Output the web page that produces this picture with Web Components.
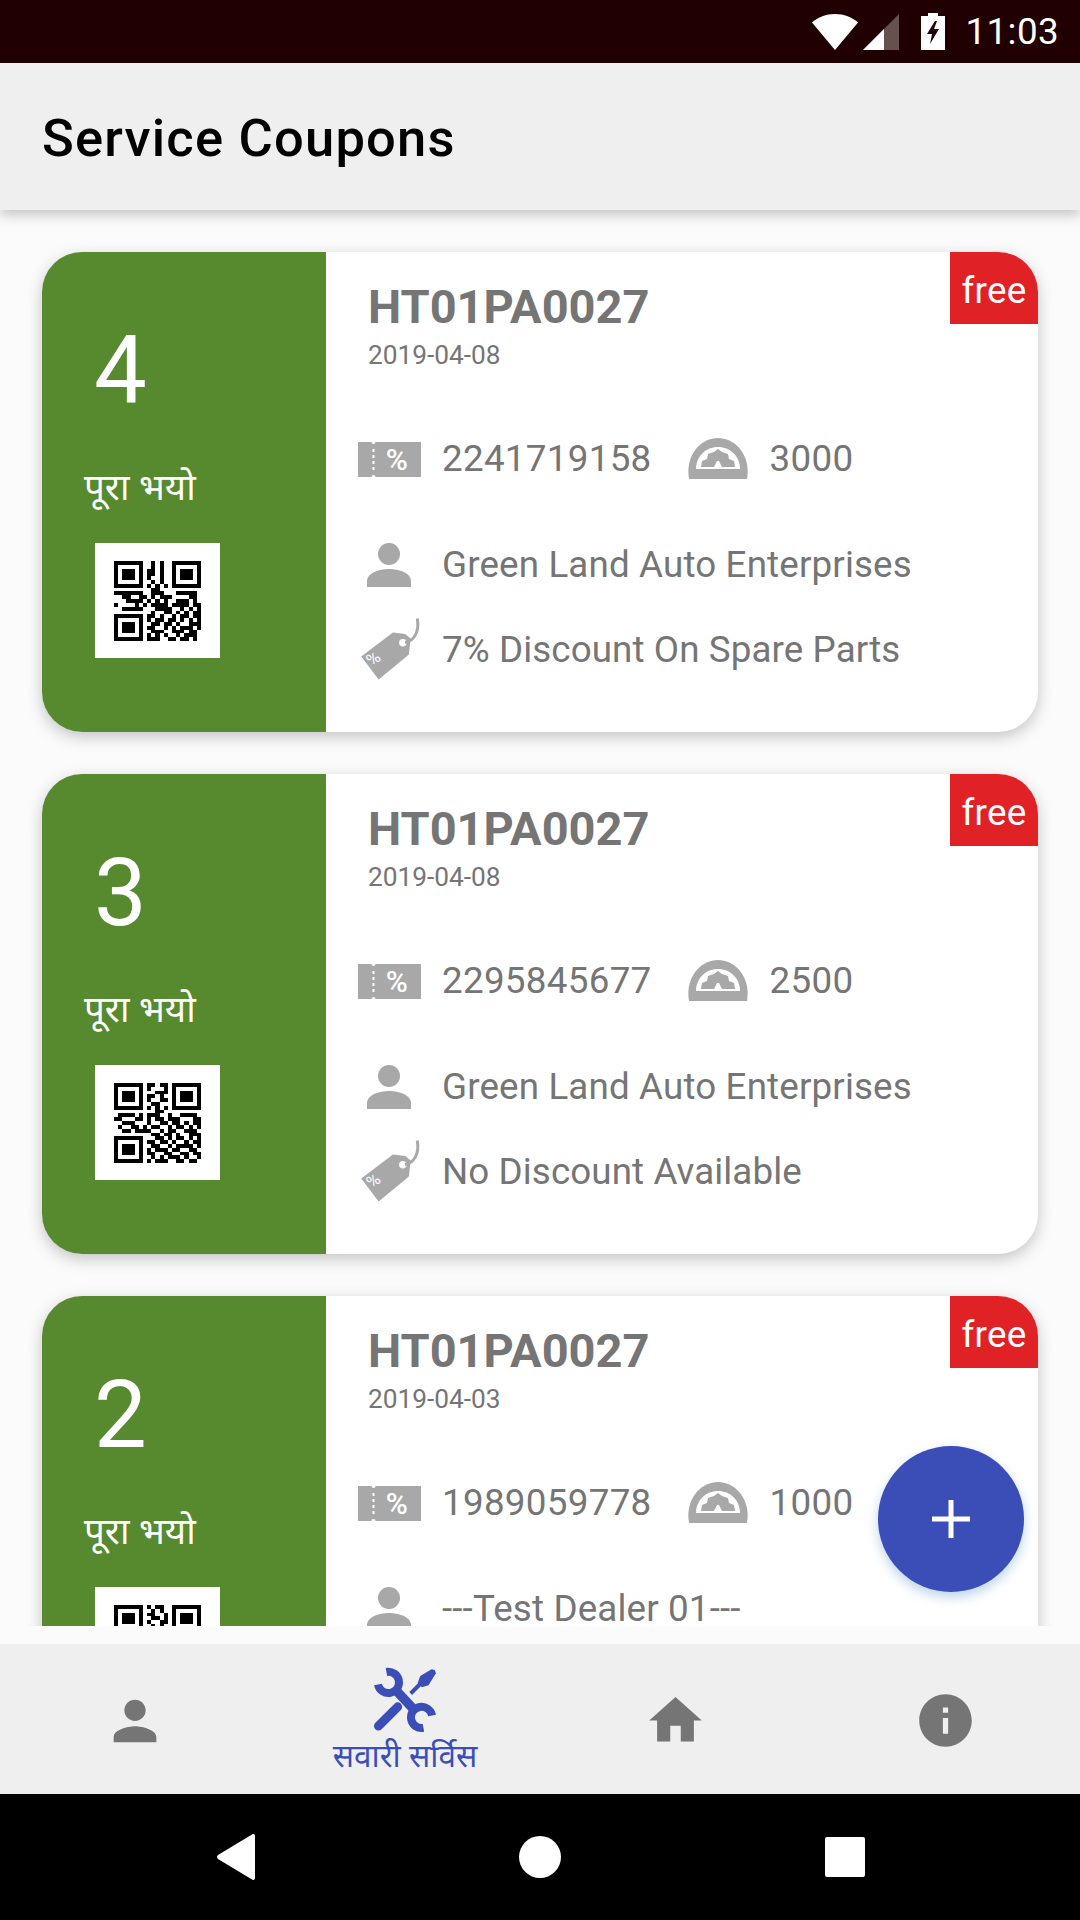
<!DOCTYPE html>
<html>
<head>
<meta charset="utf-8">
<style>
  html, body { margin: 0; padding: 0; }
  body { font-family: Roboto, "Noto Sans", sans-serif; background: #fbfbfb; }
</style>
</head>
<body>
<app-shell>
  <status-bar></status-bar>
  <app-bar>Service Coupons</app-bar>
  <coupon-list>
    <coupon-card qr="0">
      <span slot="number">4</span>
      <span slot="state">पूरा भयो</span>
      <span slot="reg">HT01PA0027</span>
      <span slot="date">2019-04-08</span>
      <span slot="coupon">2241719158</span>
      <span slot="km">3000</span>
      <span slot="dealer">Green Land Auto Enterprises</span>
      <span slot="discount">7% Discount On Spare Parts</span>
    </coupon-card>
    <coupon-card qr="1">
      <span slot="number">3</span>
      <span slot="state">पूरा भयो</span>
      <span slot="reg">HT01PA0027</span>
      <span slot="date">2019-04-08</span>
      <span slot="coupon">2295845677</span>
      <span slot="km">2500</span>
      <span slot="dealer">Green Land Auto Enterprises</span>
      <span slot="discount">No Discount Available</span>
    </coupon-card>
    <coupon-card qr="2">
      <span slot="number">2</span>
      <span slot="state">पूरा भयो</span>
      <span slot="reg">HT01PA0027</span>
      <span slot="date">2019-04-03</span>
      <span slot="coupon">1989059778</span>
      <span slot="km">1000</span>
      <span slot="dealer">---Test Dealer 01---</span>
    </coupon-card>
  </coupon-list>
  <add-fab></add-fab>
  <bottom-nav></bottom-nav>
  <system-nav></system-nav>
</app-shell>

<script>
// app-shell: the whole phone screen
class AppShell extends HTMLElement {
    constructor() {
        super();
        this.attachShadow({ mode: 'open' }).innerHTML = `
            <style>
                :host {
                    display: flex;
                    flex-direction: column;
                    position: relative;
                    width: 1080px;
                    height: 1920px;
                    overflow: hidden;
                    background: #fbfbfb;
                }
            </style>
            <slot></slot>
        `;
    }
}

class StatusBar extends HTMLElement {
    constructor() {
        super();
        this.attachShadow({ mode: 'open' }).innerHTML = `
            <style>
                :host {
                    display: flex;
                    flex: none;
                    height: 63px;
                    background: #200000;
                    color: #fff;
                    align-items: center;
                    justify-content: flex-end;
                    padding-right: 21px;
                    font: 400 36.75px Roboto, sans-serif;
                    letter-spacing: .4px;
                }
                svg { display: block; fill: #fff; }
                .wifi { margin-right: 5px; }
                .signal { margin-right: 22px; }
                .batt { margin-right: 20px; }
            </style>
            <svg class="wifi" width="46" height="36" viewBox="0 0 46 36"><path d="M0 8.500C6 3.200 14 0 23 0s17 3.200 23 8.500L23 36z"/></svg>
            <svg class="signal" width="36" height="36" viewBox="0 0 36 36"><path fill="#665050" d="M36 0v36H0z"/><path d="M21 15v21H0z"/></svg>
            <svg class="batt" width="24" height="37" viewBox="0 0 24 37"><path fill-rule="evenodd" d="M7 0h10v3h7v34H0V3h7zM14 8L6 21h5l-2 10 9-15h-5l3-8z"/></svg>
            <span>11:03</span>
        `;
    }
}

class AppBar extends HTMLElement {
    constructor() {
        super();
        this.attachShadow({ mode: 'open' }).innerHTML = `
            <style>
                :host {
                    display: flex;
                    flex: none;
                    position: relative;
                    z-index: 2;
                    height: 147px;
                    box-sizing: border-box;
                    align-items: center;
                    padding: 3px 0 0 42px;
                    background: #efeff0;
                    color: #000;
                    font: 500 52.5px Roboto, sans-serif;
                    letter-spacing: 1.2px;
                    box-shadow: 0 5px 12px rgba(0, 0, 0, .22);
                }
            </style>
            <slot></slot>
        `;
    }
}

class CouponList extends HTMLElement {
    constructor() {
        super();
        this.attachShadow({ mode: 'open' }).innerHTML = `
            <style>
                :host {
                    display: flex;
                    flex-direction: column;
                    flex: none;
                    height: 1416px;
                    box-sizing: border-box;
                    padding: 42px 42px 0;
                    gap: 42px;
                    overflow: hidden;
                    background: #fbfbfb;
                }
            </style>
            <slot></slot>
        `;
    }
}

// one row of 21 modules per string, finder squares are added by the code
const QR_PATTERNS = [
    ['01010', '01010', '11010', '11010', '10010', '01010', '10101', '01100',
     '111111100111000111110', '001100110101110000110', '000111101010100111010', '100001010111101111011', '001111100011110010101',
     '0100110101011',
     '1101001011011', '1011011010101', '0110110100111', '1100101011101', '0111001110110', '1010100101110', '1110011011010'],
    ['11011', '10001', '00111', '11010', '10011', '01100', '10101', '00110',
     '011110101110010011110', '110001101011011100011', '001110001001101101011', '010011010110010110101', '001101111001011001110',
     '0110110100111',
     '0011010110101', '1101101001011', '0110010111101', '1011101100110', '1100110011011', '0101011101001', '1011100110110'],
    ['10110', '01010', '11001', '01101', '10011', '01010', '10101', '11000',
     '110110101011011010011', '011001001101100110101', '101011110010011011100', '010110011101110100010', '110011100110001011011',
     '1010011100101',
     '0110110011010', '1001101010111', '1100010111001', '0111010100110', '1010111001101', '1101001110010', '0010110101011']
];

class QrCode extends HTMLElement {
    constructor() {
        super();
        this.attachShadow({ mode: 'open' });
    }

    connectedCallback() {
        const rows = QR_PATTERNS[Number(this.getAttribute('pattern')) || 0];
        let cells = '';
        const dot = (x, y, w = 1, h = 1) => { cells += `<rect x="${x}" y="${y}" width="${w}" height="${h}"/>`; };

        // the three finder squares
        [[0, 0], [14, 0], [0, 14]].forEach(([x, y]) => {
            dot(x, y, 7, 1); dot(x, y + 6, 7, 1); dot(x, y, 1, 7); dot(x + 6, y, 1, 7); dot(x + 2, y + 2, 3, 3);
        });

        rows.forEach((row, y) => {
            let start = 8;
            if (row.length === 21) start = 0;
            [...row].forEach((bit, i) => { if (bit === '1') dot(start + i, y); });
        });

        this.shadowRoot.innerHTML = `
            <style>
                :host {
                    display: flex;
                    width: 125px;
                    height: 115px;
                    background: #fff;
                    align-items: center;
                    justify-content: center;
                }
                svg { display: block; fill: #000; }
            </style>
            <svg width="87" height="80" viewBox="0 0 21 21" preserveAspectRatio="none" shape-rendering="crispEdges">${cells}</svg>
        `;
    }
}

class CouponCard extends HTMLElement {
    constructor() {
        super();
        this.attachShadow({ mode: 'open' });
    }

    connectedCallback() {
        // the last card is cut off by the list, it has no discount line to show
        const discountRow = this.querySelector('[slot="discount"]') ? `
                <div class="row c">
                    <div class="icon">
                        <svg width="63" height="64" viewBox="1 0 59 60">
                            <path d="M4 36L33.700 13.700 45.300 15 50.300 19.300 48.700 34.300 20.300 57.700z"/>
                            <circle cx="43" cy="23.300" r="3.500" fill="#fff"/>
                            <path d="M45 23c8-1 14-10 11.500-22.500" fill="none" stroke="#a9a8a9" stroke-width="2.800"/>
                            <text x="0" y="0" transform="translate(14 46) rotate(-38)" font-family="Roboto" font-size="16" fill="#fff">%</text>
                        </svg>
                    </div>
                    <slot name="discount"></slot>
                </div>` : '';

        this.shadowRoot.innerHTML = `
            <style>
                :host {
                    display: flex;
                    flex: none;
                    position: relative;
                    height: 480px;
                    border-radius: 40px;
                    background: #fff;
                    overflow: hidden;
                    box-shadow: 0 5px 16px rgba(0, 0, 0, .22);
                }
                .left {
                    flex: none;
                    width: 284px;
                    box-sizing: border-box;
                    padding: 67px 0 0 42px;
                    background: #578a2f;
                    color: #fff;
                }
                .num { font-size: 94px; line-height: 104px; padding-left: 10px; }
                .state {
                    font: 36.75px "Noto Sans", "Noto Sans Devanagari", sans-serif;
                    line-height: 50px;
                    margin-top: 38px;
                }
                qr-code { margin: 32px 0 0 11px; }
                .right {
                    flex: 1;
                    padding: 28px 0 0 32px;
                    color: #757575;
                    font-size: 36.75px;
                    letter-spacing: .3px;
                }
                .reg { font-size: 47px; font-weight: 700; line-height: 54px; padding-left: 10px; letter-spacing: 0; }
                .date { font-size: 26.25px; line-height: 30px; margin-top: 6px; padding-left: 10px; letter-spacing: 0; }
                .row { display: flex; align-items: center; height: 60px; }
                .row.a { margin-top: 58px; }
                .row.b { margin-top: 46px; letter-spacing: .15px; }
                .row.c { margin-top: 25px; letter-spacing: .1px; }
                .icon { flex: none; width: 84px; padding-top: 2px; }
                svg { display: block; fill: #a9a8a9; }
                .gauge { flex: none; margin-left: 36px; width: 82px; }
                .free {
                    position: absolute;
                    top: 0;
                    right: 0;
                    width: 88px;
                    height: 72px;
                    background: #e02126;
                    color: #fff;
                    font-size: 36.75px;
                    line-height: 78px;
                    text-align: center;
                    letter-spacing: .3px;
                }
            </style>
            <div class="left">
                <div class="num"><slot name="number"></slot></div>
                <div class="state"><slot name="state"></slot></div>
                <qr-code pattern="${this.getAttribute('qr') || 0}"></qr-code>
            </div>
            <div class="right">
                <div class="reg"><slot name="reg"></slot></div>
                <div class="date"><slot name="date"></slot></div>
                <div class="row a">
                    <div class="icon">
                        <svg width="63" height="35" viewBox="0 0 63 35">
                            <path d="M0 0h13.500a2 2 0 0 0 4 0H63v35H17.500a2 2 0 0 0-4 0H0z"/>
                            <path fill="#fff" d="M14.500 7h2v3h-2zM14.500 13h2v3h-2zM14.500 19h2v3h-2zM14.500 25h2v3h-2z"/>
                            <text x="39" y="28" text-anchor="middle" font-family="Roboto" font-size="30" font-weight="500" fill="#fff">%</text>
                        </svg>
                    </div>
                    <slot name="coupon"></slot>
                    <div class="gauge">
                        <svg width="60" height="41" viewBox="0 0 60 41">
                            <path d="M1 41C-3 18 12 0 30 0s33 18 29 41z"/>
                            <path fill="#fff" d="M8 31C8 18 18 9 30 9s22 9 22 22z"/>
                            <path d="M13 29l1-6 5-2 1-5 6-2 4-3 4 3 6 2 1 5 5 2 1 6-13 0-3-6h-2l-3 6z"/>
                        </svg>
                    </div>
                    <slot name="km"></slot>
                </div>
                <div class="row b">
                    <div class="icon">
                        <svg width="63" height="44" viewBox="0 0 63 44">
                            <circle cx="31" cy="11" r="11"/>
                            <path d="M9 44v-6c0-8 12-12 22-12s22 4 22 12v6z"/>
                        </svg>
                    </div>
                    <slot name="dealer"></slot>
                </div>${discountRow}
            </div>
            <div class="free">free</div>
        `;
    }
}

class AddFab extends HTMLElement {
    constructor() {
        super();
        this.attachShadow({ mode: 'open' }).innerHTML = `
            <style>
                :host {
                    display: flex;
                    position: absolute;
                    z-index: 3;
                    left: 878px;
                    top: 1446px;
                    width: 146px;
                    height: 146px;
                    border-radius: 50%;
                    background: #3b4eb8;
                    align-items: center;
                    justify-content: center;
                    box-shadow: 0 5px 12px rgba(60, 130, 190, .35);
                }
                svg { display: block; fill: #fff; }
            </style>
            <svg width="38" height="38" viewBox="0 0 38 38"><path d="M16.500 0h5v16.500H38v5H21.500V38h-5V21.500H0v-5h16.500z"/></svg>
        `;
    }
}

class NavItem extends HTMLElement {
    constructor() {
        super();
        this.attachShadow({ mode: 'open' }).innerHTML = `
            <style>
                :host {
                    display: flex;
                    flex: 1;
                    flex-direction: column;
                    align-items: center;
                    justify-content: center;
                    padding-top: 6px;
                    color: #757575;
                    fill: currentColor;
                }
                :host([active]) { color: #3b4eb8; justify-content: flex-start; padding-top: 22px; }
                .label { font: 31.5px "Noto Sans", sans-serif; line-height: 36px; margin-top: 3px; }
                ::slotted(svg) { display: block; }
            </style>
            <slot></slot>
            <div class="label"><slot name="label"></slot></div>
        `;
    }
}

class BottomNav extends HTMLElement {
    constructor() {
        super();
        this.attachShadow({ mode: 'open' }).innerHTML = `
            <style>
                :host {
                    display: flex;
                    flex: none;
                    height: 150px;
                    margin-top: 18px;
                    background: #efeff0;
                }
                nav-item svg { display: block; fill: currentColor; }
            </style>
            <nav-item>
                <svg width="64" height="64" viewBox="0 0 24 24"><path d="M12 12c2.210 0 4-1.790 4-4s-1.790-4-4-4-4 1.790-4 4 1.790 4 4 4zm0 2c-2.670 0-8 1.340-8 4v2h16v-2c0-2.660-5.330-4-8-4z"/></svg>
            </nav-item>
            <nav-item active>
                <svg width="70" height="68" viewBox="150 45 210 205">
                    <g fill="none" stroke="#3b4eb8">
                        <path stroke-width="24" d="M199 63A32 32 0 1 1 173.500 100.600"/>
                        <path stroke-width="24" d="M336.500 194.400A32 32 0 1 0 310.600 231.500"/>
                        <path stroke-width="28" d="M222 112L288 183"/>
                        <path stroke-width="27" stroke-linecap="round" d="M233 168L175 226"/>
                        <path stroke-width="12" d="M272 128L300 100"/>
                    </g>
                    <path fill="#3b4eb8" d="M345 57l3 10-22 36-20 6-13-13 8-21 34-20z"/>
                </svg>
                <span slot="label">सवारी सर्विस</span>
            </nav-item>
            <nav-item>
                <svg width="63" height="63" viewBox="0 0 24 24"><path d="M10 20v-6h4v6h5v-8h3L12 3 2 12h3v8z"/></svg>
            </nav-item>
            <nav-item>
                <svg width="63" height="63" viewBox="0 0 24 24"><path d="M12 2C6.480 2 2 6.480 2 12s4.480 10 10 10 10-4.480 10-10S17.520 2 12 2zm1 15h-2v-6h2v6zm0-8h-2V7h2v2z"/></svg>
            </nav-item>
        `;
    }
}

class SystemNav extends HTMLElement {
    constructor() {
        super();
        this.attachShadow({ mode: 'open' }).innerHTML = `
            <style>
                :host {
                    display: flex;
                    flex: none;
                    height: 126px;
                    background: #000;
                    align-items: center;
                    justify-content: center;
                    gap: 264px;
                    padding-left: 1px;
                }
                svg { display: block; fill: #fff; }
            </style>
            <svg width="38" height="46" viewBox="0 0 38 46"><path d="M38 2v42c0 2-2 2.500-3 1.500L1 25c-1.300-1-1.300-3 0-4L35 .5C36-.5 38 0 38 2z"/></svg>
            <svg width="42" height="42" viewBox="0 0 42 42"><circle cx="21" cy="21" r="21"/></svg>
            <svg width="40" height="40" viewBox="0 0 40 40"><rect width="40" height="40" rx="2"/></svg>
        `;
    }
}

// Define the elements.
customElements.define('app-shell', AppShell);
customElements.define('status-bar', StatusBar);
customElements.define('app-bar', AppBar);
customElements.define('coupon-list', CouponList);
customElements.define('qr-code', QrCode);
customElements.define('coupon-card', CouponCard);
customElements.define('add-fab', AddFab);
customElements.define('nav-item', NavItem);
customElements.define('bottom-nav', BottomNav);
customElements.define('system-nav', SystemNav);
</script>
</body>
</html>
